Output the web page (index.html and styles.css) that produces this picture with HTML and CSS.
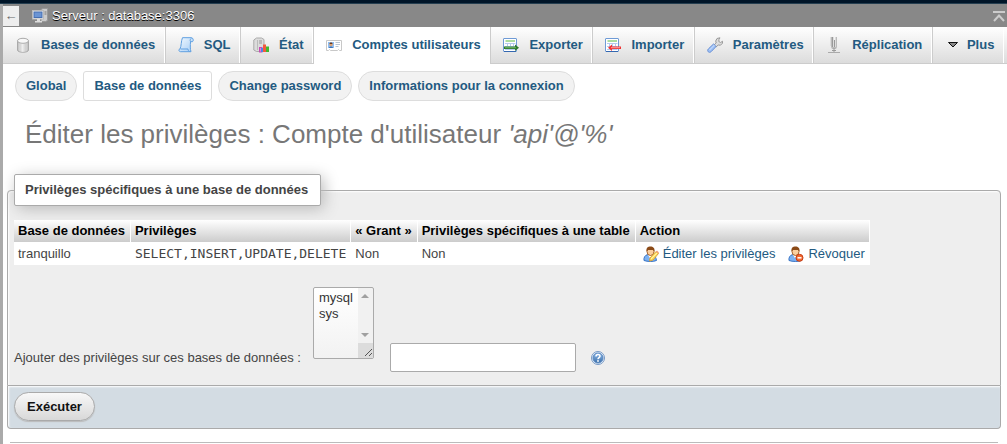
FILE: index.html
```html
<!DOCTYPE html>
<html lang="fr">
<head>
<meta charset="utf-8">
<title>Privilèges</title>
<link rel="stylesheet" href="styles.css">
</head>
<body>
<svg class="defs" width="0" height="0" aria-hidden="true">
  <defs>
    <linearGradient id="cyl"><stop offset="0" stop-color="#bbb"/><stop offset=".45" stop-color="#fff"/><stop offset="1" stop-color="#bbb"/></linearGradient>
    <linearGradient id="paper" x2="1" y2="1"><stop offset="0" stop-color="#f2f9ff"/><stop offset="1" stop-color="#a5cdf5"/></linearGradient>
    <linearGradient id="blue" x2="0" y2="1"><stop offset="0" stop-color="#8db9ea"/><stop offset="1" stop-color="#3a6ea8"/></linearGradient>
    <symbol id="sheet" viewBox="0 0 16 16">
      <rect x=".5" y="1.5" width="13" height="13" rx=".5" fill="#fff" stroke="#6f9bd6"/>
      <path d="M1 14.5h12" stroke="#3568b0"/>
      <path d="M2.500 4h9.500" stroke="#8fd07e" stroke-width="1.500"/>
      <path d="M2 6.500h10.500M2 9.500h10.500M2 12.500h10.500M4.500 6v7M7.500 6v7M10.500 6v7" stroke="#b5caee"/>
    </symbol>
    <symbol id="person" viewBox="0 0 16 16">
      <path d="M1 14.500c-.5-3 1-5.500 4-6h4c3 .5 4 3 4.500 6-3 1.300-9 1.300-12.500 0z" fill="#7db2f2" stroke="#3a74c4"/>
      <path d="M5 9l2 3 3-3z" fill="#fff"/>
      <ellipse cx="7.500" cy="5.500" rx="3.500" ry="4" fill="#fbcf9e" stroke="#a8642c"/>
      <path d="M3.500 5.500C3 1.800 5 .6 7.500.6S12 2 11.500 5.500L10 4 5 4z" fill="#8b4a17"/>
    </symbol>
  </defs>
</svg>
<div class="topline"></div>
<div class="page">
  <header class="server">
    <button class="back" type="button" aria-label="Masquer le panneau">←</button>
    <svg class="icon" viewBox="0 0 16 16"><path d="M9 1.500l2-1h4.500v12l-2 1H9z" fill="#ccc" stroke="#999"/><path d="M12.500 4h2M12.500 6h2" stroke="#777"/><rect x=".5" y="2.500" width="11" height="8.500" fill="#eee" stroke="#bbb"/><rect x="2" y="4" width="8" height="5.500" fill="#6a94d4" stroke="#466fb0"/><path d="M5 11h3v2h2v1.500H3V13h2z" fill="#ddd"/></svg>
    <span class="server-name">Serveur : database:3306</span>
    <button class="collapse" type="button" aria-label="Haut de page"><svg width="12" height="12" viewBox="0 0 12 12"><path d="M0 2h12M1 11l5-5.500L11 11" fill="none" stroke="#ccc" stroke-width="2"/></svg></button>
  </header>
  <nav class="tabs">
    <a class="tab" href="#"><svg class="icon" viewBox="0 0 16 16"><path d="M2.500 4v9c0 3 11 3 11 0V4z" fill="url(#cyl)" stroke="#aaa"/><ellipse cx="8" cy="3.800" rx="5.500" ry="2.500" fill="#f8f8f8" stroke="#aaa"/><path d="M6 7v7M8 7v7M10 7v7" stroke="#aaa" stroke-opacity=".4"/></svg>Bases de données</a>
    <a class="tab" href="#"><svg class="icon" viewBox="0 0 16 16"><path d="M4.500.7h9c1.500 0 2.500 3 1 4h-2c-.2 4-.5 7 .5 10H2.500C.5 14.700.5 12 2 12c1.500-3 1-8 2.500-11.300z" fill="url(#paper)" stroke="#5f9fe0"/><path d="M12.500 4.700c-.8-1.500 0-3 1-3.500M2.500 12h7.500c0 1 .5 2 1.500 2.500" fill="none" stroke="#5f9fe0"/></svg>SQL</a>
    <a class="tab" href="#"><svg class="icon" viewBox="0 0 16 16"><path d="M3.500 1h5L11 2.500V13l-2 1.500H3.500L.8 13V3z" fill="#dcdcdc" stroke="#aaa"/><path d="M4.500 3v10" stroke="#bbb"/><path d="M6 4h3M6 6h3" stroke="#999"/><rect x="6.500" y="10.500" width="2.500" height="4.500" fill="#e57bd8" stroke="#c84bb5"/><path d="M8 11h3v4H8z" fill="#4b85e8"/><path d="M10 7.500h3V15h-3z" fill="#f25a3d"/><path d="M13 9.500h3V15h-3z" fill="#42b82d"/></svg>État</a>
    <a class="tab active" href="#"><svg class="icon" viewBox="0 0 16 16"><path d="M.5 3.500h15v10h-2l-1-1-1 1h-7l-1-1-1 1h-2z" fill="#fff" stroke="#c8c8c8"/><rect x="2" y="5" width="6" height="6" fill="#8fbdf0"/><path d="M3 11c0-2 4-2 4 0z" fill="#3d72b8"/><circle cx="5" cy="7.500" r="1.700" fill="#dca070"/><path d="M3.500 7c0-2 3-2 3 0z" fill="#6b3a1b"/><path d="M9.500 5.500h4.500M9.500 7.500h4.500M9.500 9.500h3" stroke="#b8c4d2"/></svg>Comptes utilisateurs</a>
    <a class="tab" href="#"><svg class="icon" viewBox="0 0 16 16"><use href="#sheet"/><path d="M1 9.500h11V7.500l4 3.300-4 3.200v-2H1z" fill="#2f7a2c"/><path d="M2 10.700h11" stroke="#6fb563"/></svg>Exporter</a>
    <a class="tab" href="#"><svg class="icon" viewBox="0 0 16 16"><use href="#sheet"/><path d="M16 9.500H7V7.500l-4 3.300 4 3.200v-2h9z" fill="#e33"/><path d="M6 10.700h9" stroke="#ff9c9c"/></svg>Importer</a>
    <a class="tab" href="#"><svg class="icon" viewBox="0 0 16 16"><path d="M13 .8L10 1.500 8.700 4l.5 2L7 8l2 2 2.200-2 2.300.2 2-2 .1-2-2 1.300-1.800-1 .2-2z" fill="#ddd" stroke="#999"/><path d="M6.500 7L1.300 12c-1.800 2 .8 4.500 2.800 2.700l5-5.200z" fill="#9dc0f5" stroke="#6a90d4"/><path d="M2.500 13l5-5" stroke="#cfe2ff"/></svg>Paramètres</a>
    <a class="tab" href="#"><svg class="icon" viewBox="0 0 16 16"><path d="M5.500 0v10M10.500 0v10" stroke="#bbb"/><path d="M4.500 0v9M7.500 0v10M9.500 0v10" stroke="#ddd"/><path d="M6.500 0v10M8.500 3v8" stroke="#999"/><path d="M5 10h6l-1 2H6z" fill="#bbb"/><path d="M8 11v4M6 13.500h4" stroke="#999"/><path d="M2 15.500h12" stroke="#aaa"/></svg>Réplication</a>
    <a class="tab more" href="#"><svg class="icon" viewBox="0 0 16 16"><path d="M3.500 5.500h9L8 10z" fill="#888" stroke="#111"/></svg>Plus</a>
  </nav>
  <nav class="subtabs">
    <a class="pill" href="#">Global</a>
    <a class="pill current" href="#">Base de données</a>
    <a class="pill" href="#">Change password</a>
    <a class="pill" href="#">Informations pour la connexion</a>
  </nav>
  <main>
    <h2>Éditer les privilèges : Compte d'utilisateur <i>'api'@'%'</i></h2>
    <form>
      <fieldset>
        <legend>Privilèges spécifiques à une base de données</legend>
        <table>
          <thead><tr><th>Base de données</th><th>Privilèges</th><th>« Grant »</th><th>Privilèges spécifiques à une table</th><th>Action</th></tr></thead>
          <tbody><tr>
            <td>tranquillo</td><td><code>SELECT,INSERT,UPDATE,DELETE</code></td><td>Non</td><td>Non</td>
            <td><div class="actions">
              <a href="#"><svg class="icon" viewBox="0 0 16 16"><use href="#person"/><path d="M7 12l6-6.500 2.500 2L10 14l-3.500 1z" fill="#ffdf61" stroke="#d9a23a"/><path d="M8 13l6-6" stroke="#fff3a8"/><path d="M13 5.500l1-1 2 2-1 1z" fill="#f3a07b"/></svg>Éditer les privilèges</a>
              <a href="#"><svg class="icon" viewBox="0 0 16 16"><use href="#person"/><circle cx="11.500" cy="11.800" r="3.500" fill="#f36b32" stroke="#c83c12"/><path d="M9.500 11.800h4" stroke="#fff" stroke-width="1.500"/></svg>Révoquer</a>
            </div></td>
          </tr></tbody>
        </table>
        <div class="add-row">
          <label for="dbs">Ajouter des privilèges sur ces bases de données :</label>
          <select id="dbs" multiple><option>mysql</option><option>sys</option></select>
          <input id="dbname" type="text" aria-label="Nom de base de données">
          <a class="help" href="#" aria-label="Documentation"><svg class="icon" viewBox="0 0 16 16"><circle cx="8" cy="8" r="6.500" fill="#e8f1fb" stroke="#7598c5"/><circle cx="8" cy="8" r="5" fill="url(#blue)" stroke="#5b88bf"/><path d="M6 6.500c0-2.500 4-2.500 4-.3 0 1.300-2 1.500-2 3" fill="none" stroke="#fff" stroke-width="1.500"/><circle cx="8" cy="11" r=".9" fill="#fff"/></svg></a>
        </div>
      </fieldset>
      <div class="form-footer"><button class="submit" type="submit">Exécuter</button></div>
    </form>
    <hr>
  </main>
</div>
</body>
</html>
```
FILE: styles.css
```css
* { box-sizing: border-box; }
body {
  margin: 0;
  background: #fff;
  color: #444;
  font: 13px/16px "Liberation Sans", Arial, sans-serif;
  overflow: hidden;
}
a { color: #235a81; text-decoration: none; }
button { font: inherit; cursor: pointer; }
.defs { position: absolute; }
.icon { width: 16px; height: 16px; flex: none; }
.topline { height: 4px; background: #001528; border-bottom: 1px solid #243e50; }
.page { border-left: 3px solid #aaa; min-height: calc(100vh - 4px); }

.server {
  display: flex;
  align-items: center;
  height: 23px;
  background: #888;
  color: #fff;
}
.back {
  width: 16px;
  height: 20px;
  margin-right: 13px;
  padding: 0;
  border: 0;
  background: #eee;
  color: #666;
}
.server-name { margin-left: 4px; text-shadow: 0 1px 0 #000; }
.collapse {
  display: flex;
  margin-left: auto;
  padding: 0 2px 0 0;
  border: 0;
  background: none;
}

.tabs {
  display: flex;
  height: 37px;
  padding-right: 3px;
  background: linear-gradient(#fff, #dcdcdc);
  border-bottom: 1px solid #ccc;
}
.tab {
  display: flex;
  flex: 1 0 auto;
  align-items: center;
  gap: 10px;
  padding: 0 8px 1px 12px;
  border-left: 1px solid #ccc;
  border-right: 1px solid #fff;
  font-weight: bold;
  white-space: nowrap;
}
.tab:first-child { border-left: 0; }
.tab.active { height: 37px; padding-bottom: 2px; background: #fff; }
.tab.more { gap: 6px; }

.subtabs { display: flex; gap: 6px; padding: 7px 12px 0; }
.pill {
  padding: 6px 10px;
  height: 30px;
  border: 1px solid #ddd;
  border-radius: 15px;
  background: #f2f2f2;
  font-weight: bold;
  white-space: nowrap;
}
.pill.current { background: #fff; border-radius: 3px; }

main { padding: 0 6px 0 4px; }
h2 {
  margin: 18px 0 25px 18px;
  color: #777;
  font-size: 26px;
  line-height: 30px;
  font-weight: normal;
}
fieldset {
  margin: 0;
  padding: 14px 6px 13px;
  min-width: 0;
  border: 1px solid #aaa;
  border-radius: 4px 4px 0 0;
  background: #eee;
  box-shadow: inset 1px 1px 2px #fff;
}
legend {
  padding: 7px 12px 7px 10px;
  border: 1px solid #aaa;
  border-radius: 2px;
  background: #fff;
  box-shadow: 3px 3px 15px #bbb;
  font-weight: bold;
}
table { border-collapse: separate; border-spacing: 0; }
th {
  height: 22px;
  padding: 0 5px 0 4px;
  border-right: 1px solid #fff;
  background: linear-gradient(#fff, #ccc);
  color: #000;
  text-align: left;
  white-space: nowrap;
}
td {
  height: 23px;
  padding: 0 5px 0 4px;
  background: #fff;
  white-space: nowrap;
}
code { font: 13px/16px "DejaVu Sans Mono", monospace; }
.actions { display: flex; gap: 13px; padding-left: 3px; }
.actions a { display: flex; align-items: center; gap: 4px; }

.add-row { display: flex; align-items: flex-end; margin-top: 22px; }
.add-row label, .help { margin-bottom: 6px; }
.add-row select {
  width: 61px;
  height: 72px;
  margin: 0 16px 13px 12px;
  padding: 2px 0 0;
  border: 1px solid #aaa;
  border-radius: 2px;
  background:
    url("data:image/svg+xml,%3Csvg xmlns='http://www.w3.org/2000/svg' width='8' height='4'%3E%3Cpath d='M0 4L4 0l4 4z' fill='%23a0a0a0'/%3E%3C/svg%3E") right 4px top 6px no-repeat,
    url("data:image/svg+xml,%3Csvg xmlns='http://www.w3.org/2000/svg' width='8' height='4'%3E%3Cpath d='M0 0l4 4 4-4z' fill='%23a0a0a0'/%3E%3C/svg%3E") right 4px bottom 21px no-repeat,
    linear-gradient(#f1f1f1, #f1f1f1) right / 15px 100% no-repeat,
    linear-gradient(#fff, #f2f2f2);
  color: #333;
  font: inherit;
  resize: both;
  overflow: auto;
  outline: 0;
}
.add-row option { padding: 0 0 0 5px; min-height: 16px; line-height: 16px; }
.add-row select::-webkit-scrollbar { width: 15px; }
.add-row select::-webkit-resizer { background: #dcdcdc url("data:image/svg+xml,%3Csvg xmlns='http://www.w3.org/2000/svg' width='15' height='15'%3E%3Cpath d='M7 13l7-7M11 13l3-3' stroke='%23555'/%3E%3C/svg%3E"); }
.add-row input {
  width: 186px;
  height: 29px;
  padding: 0 6px;
  border: 1px solid #aaa;
  border-radius: 2px;
  background: #fff;
  color: #333;
  font: inherit;
}
.help { display: flex; margin-left: 14px; }
.form-footer {
  padding: 6px 6px 7px;
  border: 1px solid #aaa;
  border-top: 0;
  border-radius: 0 0 4px 4px;
  background: #d3dce3;
  box-shadow: inset 1px 1px 2px #fff;
}
.submit {
  display: block;
  height: 29px;
  padding: 0 12px;
  border: 1px solid #aaa;
  border-radius: 15px;
  background: linear-gradient(#f8f8f8, #d8d8d8);
  box-shadow: 0 1px 1px #bbb;
  color: #111;
  font-weight: bold;
}
hr { margin: 13px 3px 0; border: 0; border-top: 1px solid #bbb; }
```
